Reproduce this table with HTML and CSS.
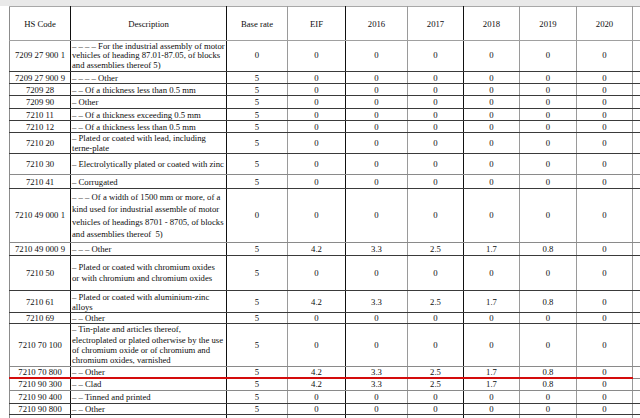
FILE: index.html
```html
<!DOCTYPE html>
<html>
<head>
<meta charset="utf-8">
<link rel="stylesheet" href="styles.css">
</head>
<body>
<div class="strip"></div>
<div class="sheet">
<table class="tariff">
<colgroup>
<col class="c1"><col class="c2"><col class="c3"><col class="c4"><col class="c5"><col class="c6"><col class="c7"><col class="c8"><col class="c9"><col class="c10">
</colgroup>
<thead>
<tr class="hdr"><th>HS Code</th><th>Description</th><th>Base rate</th><th>EIF</th><th>2016</th><th>2017</th><th>2018</th><th>2019</th><th>2020</th><th></th></tr>
</thead>
<tbody>
<tr class="r31 lh9"><td>7209 27 900 1</td><td class="d">– – – – For the industrial assembly of motor<br>vehicles of heading 87.01-87.05, of blocks<br>and assemblies thereof 5)</td><td>0</td><td>0</td><td>0</td><td>0</td><td>0</td><td>0</td><td>0</td><td></td></tr>
<tr class="r12"><td>7209 27 900 9</td><td class="d">– – – – Other</td><td>5</td><td>0</td><td>0</td><td>0</td><td>0</td><td>0</td><td>0</td><td></td></tr>
<tr class="r12"><td>7209 28</td><td class="d">– – Of a thickness less than 0.5 mm</td><td>5</td><td>0</td><td>0</td><td>0</td><td>0</td><td>0</td><td>0</td><td></td></tr>
<tr class="r13"><td>7209 90</td><td class="d">– Other</td><td>5</td><td>0</td><td>0</td><td>0</td><td>0</td><td>0</td><td>0</td><td></td></tr>
<tr class="r12"><td>7210 11</td><td class="d">– – Of a thickness exceeding 0.5 mm</td><td>5</td><td>0</td><td>0</td><td>0</td><td>0</td><td>0</td><td>0</td><td></td></tr>
<tr class="r12"><td>7210 12</td><td class="d">– – Of a thickness less than 0.5 mm</td><td>5</td><td>0</td><td>0</td><td>0</td><td>0</td><td>0</td><td>0</td><td></td></tr>
<tr class="r21 lh10"><td>7210 20</td><td class="d">– Plated or coated with lead, including<br>terne-plate</td><td>5</td><td>0</td><td>0</td><td>0</td><td>0</td><td>0</td><td>0</td><td></td></tr>
<tr class="r21 g"><td>7210 30</td><td class="d">– Electrolytically plated or coated with zinc</td><td>5</td><td>0</td><td>0</td><td>0</td><td>0</td><td>0</td><td>0</td><td></td></tr>
<tr class="r14"><td>7210 41</td><td class="d">– Corrugated</td><td>5</td><td>0</td><td>0</td><td>0</td><td>0</td><td>0</td><td>0</td><td></td></tr>
<tr class="r54 lh12 g"><td>7210 49 000 1</td><td class="d">– – – Of a width of 1500 mm or more, of a<br>kind used for industrial assemble of motor<br>vehicles of headings 8701 - 8705, of blocks<br>and assemblies thereof&nbsp; 5)</td><td>0</td><td>0</td><td>0</td><td>0</td><td>0</td><td>0</td><td>0</td><td></td></tr>
<tr class="r13"><td>7210 49 000 9</td><td class="d">– – – Other</td><td>5</td><td>4.2</td><td>3.3</td><td>2.5</td><td>1.7</td><td>0.8</td><td>0</td><td></td></tr>
<tr class="r35 lh11"><td>7210 50</td><td class="d">– Plated or coated with chromium oxides<br>or with chromium and chromium oxides</td><td>5</td><td>0</td><td>0</td><td>0</td><td>0</td><td>0</td><td>0</td><td></td></tr>
<tr class="r22 lh10"><td>7210 61</td><td class="d">– Plated or coated with aluminium-zinc<br>alloys</td><td>5</td><td>4.2</td><td>3.3</td><td>2.5</td><td>1.7</td><td>0.8</td><td>0</td><td></td></tr>
<tr class="r11"><td>7210 69</td><td class="d">– – Other</td><td>5</td><td>0</td><td>0</td><td>0</td><td>0</td><td>0</td><td>0</td><td></td></tr>
<tr class="r43 lh104 g"><td>7210 70 100</td><td class="d">– Tin-plate and articles thereof,<br>electroplated or plated otherwise by the use<br>of chromium oxide or of chromium and<br>chromium oxides, varnished</td><td>5</td><td>0</td><td>0</td><td>0</td><td>0</td><td>0</td><td>0</td><td></td></tr>
<tr class="r11 red"><td>7210 70 800</td><td class="d">– – Other</td><td>5</td><td>4.2</td><td>3.3</td><td>2.5</td><td>1.7</td><td>0.8</td><td>0</td><td class="tail"></td></tr>
<tr class="r12 g"><td>7210 90 300</td><td class="d">– – Clad</td><td>5</td><td>4.2</td><td>3.3</td><td>2.5</td><td>1.7</td><td>0.8</td><td>0</td><td></td></tr>
<tr class="r13"><td>7210 90 400</td><td class="d">– – Tinned and printed</td><td>5</td><td>0</td><td>0</td><td>0</td><td>0</td><td>0</td><td>0</td><td></td></tr>
<tr class="r11"><td>7210 90 800</td><td class="d">– – Other</td><td>5</td><td>0</td><td>0</td><td>0</td><td>0</td><td>0</td><td>0</td><td></td></tr>
<tr class="r30 lh10 top"><td></td><td class="d">– – – Flat-rolled products of iron or non-alloy<br>steel, further worked</td><td></td><td></td><td></td><td></td><td></td><td></td><td></td><td></td></tr>
</tbody>
</table>
</div>
</body>
</html>
```

FILE: styles.css
```css
html, body {
  margin: 0;
  padding: 0;
  background: #ffffff;
  overflow: hidden;
  width: 640px;
  height: 418px;
}

.strip {
  height: 6px;
  background: #e9e9e9;
}

.sheet {
  height: 412px;
  width: 640px;
  overflow: hidden;
}

.tariff {
  margin-left: 9px;
  border-collapse: collapse;
  table-layout: fixed;
  width: 683px;
  font-family: "Liberation Serif", "Times New Roman", serif;
  font-size: 8.7px;
  color: #0e0e0e;
  line-height: 10px;
}

.c1 { width: 61px; }
.c2 { width: 156px; }
.c3 { width: 61px; }
.c4 { width: 58px; }
.c5 { width: 62px; }
.c6 { width: 56px; }
.c7 { width: 56px; }
.c8 { width: 57px; }
.c9 { width: 56px; }
.c10 { width: 60px; }

.tariff th,
.tariff td {
  padding: 0;
  text-align: center;
  vertical-align: middle;
  white-space: nowrap;
  overflow: hidden;
  border-top: none;
  border-left: none;
  border-right: 1px solid #9a9a9a;
  border-bottom: 1px solid #3a3a3a;
}

.tariff th {
  font-weight: normal;
  border-top: 1px solid #a8a8a8;
  border-bottom-color: #a0a0a0;
}

.tariff th:first-child,
.tariff td:first-child {
  border-left: 1px solid #8c8c8c;
}

.tariff th:nth-child(1), .tariff td:nth-child(1),
.tariff th:nth-child(2), .tariff td:nth-child(2),
.tariff th:nth-child(4), .tariff td:nth-child(4),
.tariff th:nth-child(6), .tariff td:nth-child(6) {
  border-right-color: #111111;
}

.tariff td.d {
  text-align: left;
  padding-left: 1px;
}

.hdr { height: 34px; }
.r11 { height: 11px; }
.r12 { height: 12px; }
.r13 { height: 13px; }
.r14 { height: 14px; }
.r21 { height: 21px; }
.r22 { height: 22px; }
.r30 { height: 30px; }
.r31 { height: 31px; }
.r35 { height: 35px; }
.r43 { height: 43px; }
.r54 { height: 54px; }

.lh9 { line-height: 9.3px; }
.lh10 { line-height: 10px; }
.lh104 { line-height: 10.4px; }
.lh11 { line-height: 11px; }
.lh12 { line-height: 12.3px; }

.tariff tr.g td { border-bottom-color: #8a8a8a; }

.tariff tr.red td {
  border-bottom: 2px solid #d40c0c;
}

.tariff tr.red td.tail {
  border-bottom: 1px solid #8a8a8a;
}

.tariff tr.top td { vertical-align: top; padding-top: 1px; }
```
